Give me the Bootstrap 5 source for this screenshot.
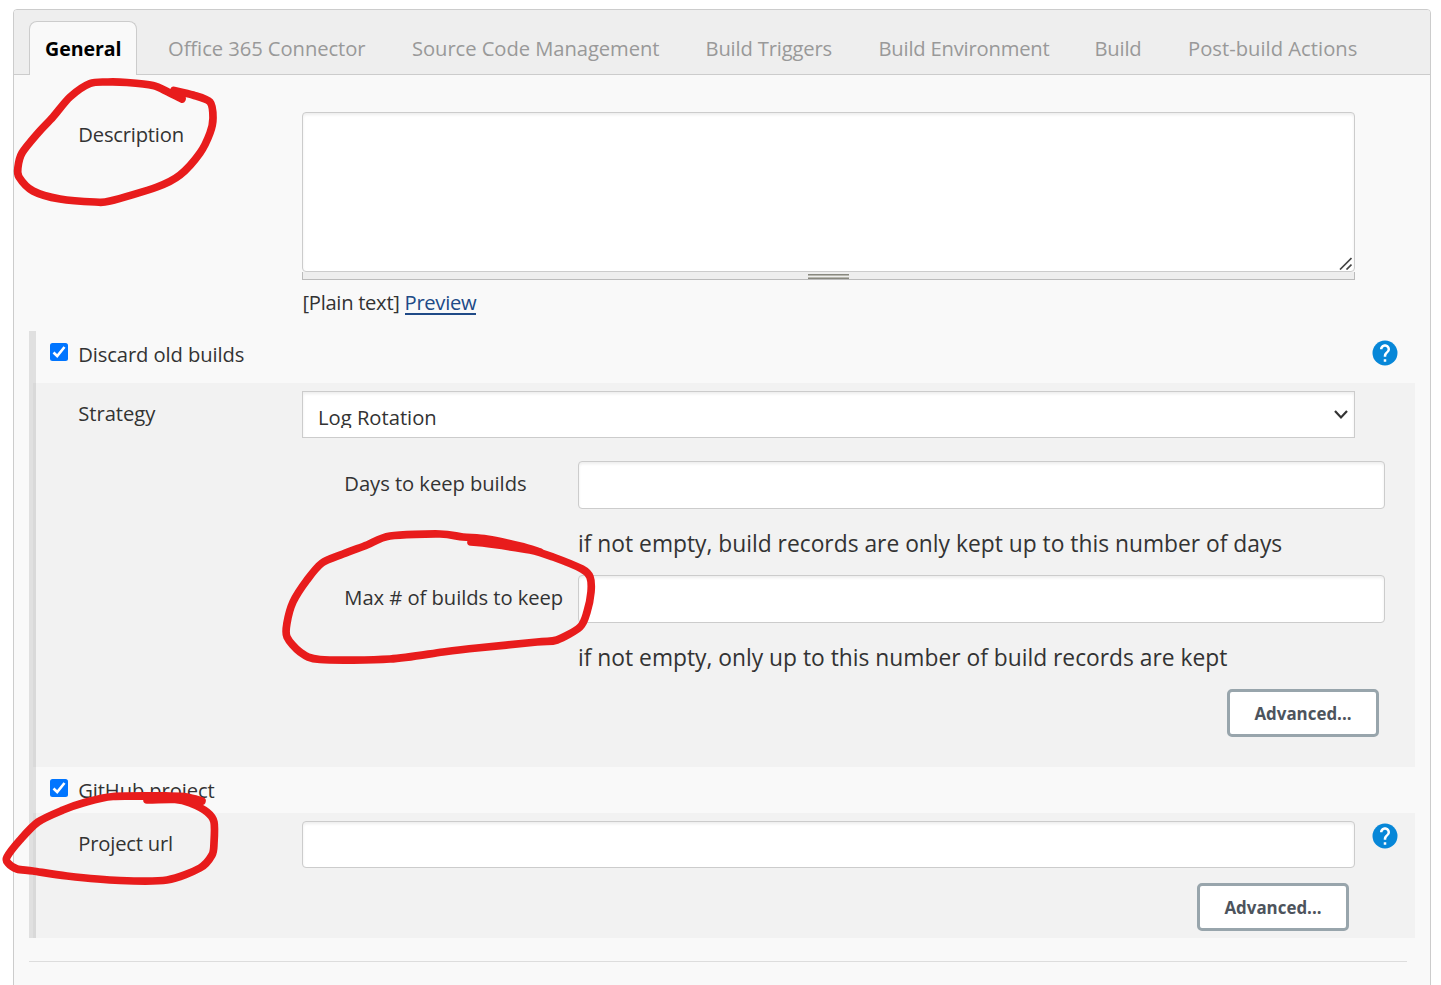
<!DOCTYPE html>
<html lang="en">
<head>
<meta charset="utf-8">
<meta name="viewport" content="width=device-width, initial-scale=1">
<title>Job configuration</title>
<link rel="stylesheet" href="https://cdn.jsdelivr.net/npm/bootstrap@5.3.0/dist/css/bootstrap.min.css">
<style>
body{background:#fff;color:#333;font:400 20.2px/28px "Open Sans","Noto Sans",sans-serif;height:985px;overflow:hidden;position:relative}
.config-panel{margin:9px 10px 0 13px;height:990px;background:#f9f9f9;border:1px solid #ccc;border-radius:4px 4px 0 0}
.config-tabs{height:65px;background:#eee;border-bottom:1px solid #ccc;padding:11px 0 0 15px;border-radius:3px 3px 0 0;flex-wrap:nowrap}
.config-tabs .nav-link{color:#999;padding:13px 0 0;height:53px;border:0;white-space:nowrap;letter-spacing:-.06px}
.config-tabs .nav-link.active{width:108px;height:54px;margin-right:31px;padding:13px 0 0 15px;color:#000;font-weight:700;font-size:19.6px;background:#f9f9f9;border:1px solid #ccc;border-bottom:0;border-radius:8px 8px 0 0}
.config-tabs .t-office{width:244px}
.config-tabs .t-scm{width:293.5px}
.config-tabs .t-trig{width:173px;letter-spacing:-.16px}
.config-tabs .t-env{width:216px;letter-spacing:-.2px}
.config-tabs .t-build{width:93.5px;letter-spacing:-.2px}
.config-tabs .t-post{letter-spacing:.02px}
.desc-row{height:256px;padding:37px 75px 0 63px}
.label-col{width:225px;flex:none;padding:8px 0 0 1.3px;white-space:nowrap;letter-spacing:-.05px}
.label-tight{letter-spacing:-.2px}
.form-control,.form-select{border:1px solid #ccc;border-radius:4px;background-color:#fff;box-shadow:inset 0 2px 3px rgba(0,0,0,.07);color:#333;padding:0;font:inherit}
textarea.form-control{height:160px;resize:none;display:block}
.text-wrap-box{position:relative}
.corner-grip{position:absolute;right:3px;top:145px}
.drag-bar{height:8px;background:#eee;border:1px solid #bbb;border-top:0}
.drag-grip{width:41px;height:5px;margin-top:2px;border:solid #888880;border-width:1px 0;background:linear-gradient(#b9b9b0 1px,#eee 1px 2px,#b9b9b0 2px)}
.markup-row{padding:8px 0 0 .5px;letter-spacing:-.3px}
.preview-link{color:#204a87;text-decoration:none;border-bottom:2px solid #204a87;display:inline-block;line-height:21px}
.section-group{margin-left:15px;margin-right:15px;background:linear-gradient(90deg,#e0e0e0 7px,transparent 7px)}
.option-head{padding:9px 15px 0 21px;height:52px}
.option-head.compact{height:46px}
.option-head label{padding-left:10.2px;letter-spacing:-.1px}
.form-check-input{width:18px;height:18px;margin:3px 0 0;border:0;border-radius:2.5px}
.form-check-input[type=checkbox]{border-radius:2.5px}
.form-check-input:checked[type=checkbox]{background-color:#0075ff;background-image:none}
.check-wrap{position:relative;width:18px;height:28px}
.check-wrap svg{position:absolute;left:0;top:3px;pointer-events:none}
.option-body{margin-left:4px;background:rgba(0,0,0,.026);padding:8px 60px 0 44px}
.option-body.rotation{height:384px}.option-body.github{height:125px}
.strategy-select{height:47px;border-radius:0;background:#fff;padding:11px 6px 0 15px}
.strategy-select .chosen{height:25px;overflow:hidden}
.nested{margin:23px -30px 0 266px}
.nested .label-col{width:235px}
.nested .form-control{height:48px}
.hint{font-size:22.8px;height:66px;padding:21px 0 0 235px;white-space:nowrap}
.btn-adv{width:152px;height:48px;border:3px solid #98a5ac;border-radius:5px;background:#fff;color:#4d545d;font-weight:700;font-size:16.9px;line-height:28px;padding:1px 0 0}
.help-icon{width:30px;height:30px;flex:none;display:block}
.rule{margin:23px 23px 0 15px;border-top:1px solid #ddd}
.ink{position:absolute;left:0;top:0;pointer-events:none}
</style>
</head>
<body>
<main class="config-panel">
  <nav class="nav config-tabs">
    <a class="nav-link active">General</a>
    <a class="nav-link t-office">Office 365 Connector</a>
    <a class="nav-link t-scm">Source Code Management</a>
    <a class="nav-link t-trig">Build Triggers</a>
    <a class="nav-link t-env">Build Environment</a>
    <a class="nav-link t-build">Build</a>
    <a class="nav-link t-post">Post-build Actions</a>
  </nav>

  <div class="desc-row d-flex">
    <div class="label-col label-tight">Description</div>
    <div class="flex-grow-1 text-wrap-box">
      <textarea class="form-control" aria-label="Description"></textarea>
      <svg class="corner-grip" width="13" height="13" stroke="#444" stroke-width="1.7"><path d="M1 12.5L12.5 1M7.5 12.5L12.5 7.500"/></svg>
      <div class="drag-bar d-flex justify-content-center"><div class="drag-grip"></div></div>
      <div class="markup-row">[Plain text] <a class="preview-link">Preview</a></div>
    </div>
  </div>

  <div class="section-group">
    <div class="option-head d-flex">
      <div class="check-wrap"><input class="form-check-input d-block" type="checkbox" checked id="discard"><svg width="18" height="18" fill="none" stroke="#fff" stroke-width="2.6"><path d="M3.500 9.500L7.200 13L14.500 4"/></svg></div>
      <label for="discard">Discard old builds</label>
      <svg class="help-icon ms-auto" style="margin-top:-2px" viewBox="0 0 24 24"><use href="#help"/></svg>
    </div>
    <div class="option-body rotation">
      <div class="d-flex">
        <div class="label-col">Strategy</div>
        <div class="form-control strategy-select d-flex justify-content-between">
          <div class="chosen">Log Rotation</div>
          <svg width="15" height="12" style="margin-top:6px" fill="none" stroke="#333" stroke-width="2.2"><path d="M2 2L8 8.500L14 2"/></svg>
        </div>
      </div>
      <div class="nested">
        <div class="d-flex"><div class="label-col">Days to keep builds</div><input class="form-control" aria-label="Days to keep builds"></div>
        <div class="hint">if not empty, build records are only kept up to this number of days</div>
        <div class="d-flex"><div class="label-col">Max # of builds to keep</div><input class="form-control" aria-label="Max builds to keep"></div>
        <div class="hint">if not empty, only up to this number of build records are kept</div>
        <div class="d-flex justify-content-end" style="padding-right:6px"><button class="btn btn-adv">Advanced...</button></div>
      </div>
    </div>
    <div class="option-head compact d-flex">
      <div class="check-wrap"><input class="form-check-input d-block" type="checkbox" checked id="github"><svg width="18" height="18" fill="none" stroke="#fff" stroke-width="2.6"><path d="M3.500 9.500L7.200 13L14.500 4"/></svg></div>
      <label for="github">GitHub project</label>
    </div>
    <div class="option-body github">
      <div class="d-flex" style="margin-right:-45px">
        <div class="label-col label-tight">Project url</div>
        <input class="form-control" style="height:47px" aria-label="Project url">
        <svg class="help-icon" style="margin-left:15px" viewBox="0 0 24 24"><use href="#help"/></svg>
      </div>
      <div class="d-flex justify-content-end" style="padding:15px 6px 0 0"><button class="btn btn-adv">Advanced...</button></div>
    </div>
  </div>
  <div class="rule"></div>
</main>

<svg width="0" height="0" class="ink"><symbol id="help" viewBox="0 0 24 24"><circle cx="12" cy="12" r="10" fill="#0787d8"/><path fill="#fff" d="M13 19h-2v-2h2v2zm2.070-7.750l-.9.920C13.450 12.900 13 13.500 13 15h-2v-.5c0-1.100.450-2.100 1.170-2.830l1.240-1.260c.370-.360.590-.860.590-1.410 0-1.100-.9-2-2-2s-2 .9-2 2H8c0-2.210 1.790-4 4-4s4 1.790 4 4c0 .880-.360 1.680-.930 2.250z"/></symbol></svg>

<!-- Hand-drawn marker rings -->
<svg class="ink" width="1441" height="985" fill="none" stroke="#e81c1c" stroke-width="7.700" stroke-linecap="round" stroke-linejoin="round">
  <path data-points="182,99 168,92 153,85.500 127,82.500 108,82 90,83.500 70,97 53,117 38,133 22,153 18,167 19,177 33,191 60,199 95,202 110,201 157,187 180,175 200,153 210,133 213,118 210,102 193,95 174,90.500"/>
  <path data-points="471,542 490,544 530,550 553,557 582,569 590,577 591,592 587,612 580,627 557,640 537,642 477,648 443,652 390,659 320,659.500 300,652 287,637 287,623 293,602 307,580 322,563 343,554 367,545 390,536 440,534 463,537 487,539 520,546 540,552"/>
  <path data-points="202,801 187,797 170,796 113,796.500 83,803 63,810 38,822 20,840 7,857 8,863 17,869 33,871 67,876 120,880.500 167,880 200,868 212,855 214,843 214,822 207,812 190,803 175,799.500 147,800"/>
</svg>
<script src="https://cdn.jsdelivr.net/npm/bootstrap@5.3.0/dist/js/bootstrap.bundle.min.js"></script>
<script>
// Turn each list of pen positions into a smooth curve.
document.querySelectorAll('[data-points]').forEach(function (path) {
  var p = path.dataset.points.split(' ').map(function (s) { return s.split(',').map(Number); });
  var d = 'M' + p[0];
  for (var i = 0; i < p.length - 1; i++) {
    var a = p[i - 1] || p[i], b = p[i], c = p[i + 1], e = p[i + 2] || c;
    d += 'C' + [b[0] + (c[0] - a[0]) / 7, b[1] + (c[1] - a[1]) / 7, c[0] - (e[0] - b[0]) / 7, c[1] - (e[1] - b[1]) / 7, c[0], c[1]];
  }
  path.setAttribute('d', d);
});
</script>
</body>
</html>
